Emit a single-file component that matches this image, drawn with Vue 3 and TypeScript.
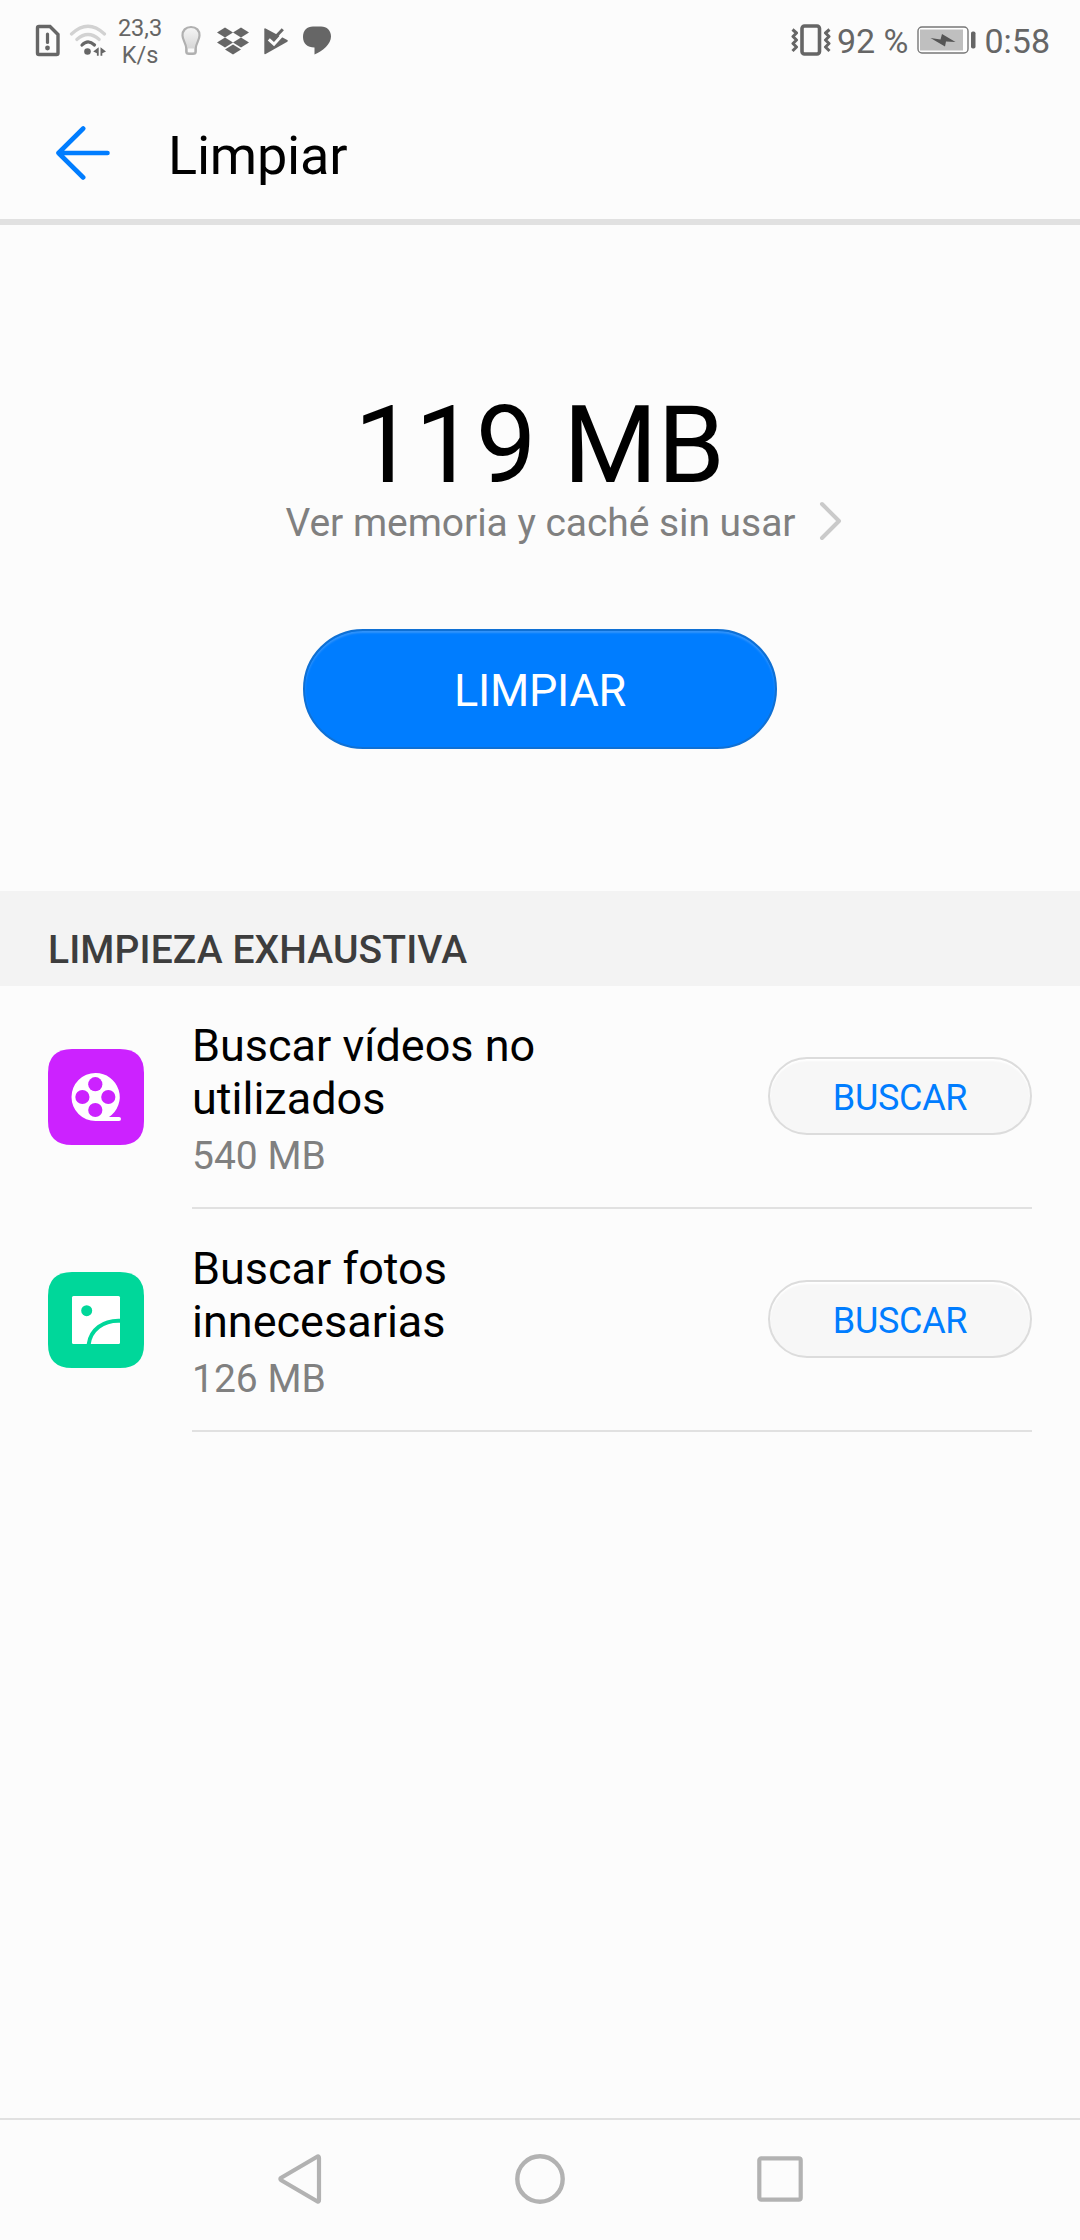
<script setup lang="ts">
interface CleanItem {
  id: 'videos' | 'photos'
  lines: string[]
  size: string
}

const items: CleanItem[] = [
  { id: 'videos', lines: ['Buscar vídeos no', 'utilizados'], size: '540 MB' },
  { id: 'photos', lines: ['Buscar fotos', 'innecesarias'], size: '126 MB' },
]
</script>

<template>
  <div class="screen">
    <div class="status">
      <div class="status-left">
        <svg class="ic-sim" width="26" height="34" viewBox="0 0 26 34">
          <path d="M4 2.500H15L23 10.500V29a1.500 1.500 0 0 1-1.500 1.500H4A1.500 1.500 0 0 1 2.500 29V4A1.500 1.500 0 0 1 4 2.500Z" fill="none" stroke="#666" stroke-width="3.400" />
          <path d="M12.500 10V18.500" stroke="#666" stroke-width="3.200" stroke-linecap="round" />
          <circle cx="12.500" cy="24" r="2.400" fill="#666" />
        </svg>
        <svg class="ic-wifi" width="40" height="34" viewBox="0 0 40 34">
          <g fill="none" stroke-width="3.200" stroke-linecap="round">
            <path d="M2.500 10Q19 -5.500 35.500 10" stroke="#d2d2d2" />
            <path d="M7.800 15.500Q19 5.500 30.200 15.500" stroke="#d2d2d2" />
            <path d="M13 21Q19 14.800 25.500 21" stroke="#666" />
          </g>
          <circle cx="18.500" cy="27.500" r="3.300" fill="#666" />
          <path d="M29.700 23.200v8.500h-1.800v-2.500l-3.700-1.700zM31.500 23.200v8.500h1.800v-2.500l3.700-1.700z" fill="#666" />
        </svg>
        <div class="speed"><span>23,3</span><span>K/s</span></div>
        <svg class="ic-bulb" width="22" height="32" viewBox="0 0 22 32">
          <defs>
            <linearGradient id="bulb" x1="0" y1="0" x2="0" y2="1">
              <stop offset="0" stop-color="#f6f6f6" />
              <stop offset="1" stop-color="#cfcfcf" />
            </linearGradient>
          </defs>
          <path d="M11 2C5.500 2 2.500 5.500 2.500 10.500C2.500 15 6 18.500 6.200 23V26.500Q6.200 29 9 29H13Q15.800 29 15.800 26.500V23C16 18.500 19.500 15 19.500 10.500C19.500 5.500 16.500 2 11 2Z" fill="url(#bulb)" stroke="#b0b0b0" stroke-width="2.200" />
          <path d="M8 23.500H14V27H8Z" fill="#fafafa" />
        </svg>
        <svg class="ic-box" width="32" height="28" viewBox="0 0 32 28">
          <g fill="#666">
            <path d="M8 .5L16 5.500L8 10.500L0 5.500Z" />
            <path d="M24 .5L32 5.500L24 10.500L16 5.500Z" />
            <path d="M8 10.500L16 15.500L8 20.500L0 15.500Z" />
            <path d="M24 10.500L32 15.500L24 20.500L16 15.500Z" />
            <path d="M16 17.500L24 22.500L16 27.500L8 22.500Z" />
          </g>
        </svg>
        <svg class="ic-play" width="25" height="27" viewBox="0 0 25 27">
          <path d="M.3 1.200Q.3 0 1.600 .5L23.300 12Q24.500 12.800 23.300 13.800L1.600 26Q.3 26.500 .3 25.300Z" fill="#666" />
          <path d="M4.800 11.300L10 16.200L20.800 4.200" fill="none" stroke="#fcfcfc" stroke-width="3" />
          <path d="M9.800 10.800L18.800 1.300" fill="none" stroke="#666" stroke-width="3" />
        </svg>
        <svg class="ic-chat" width="28" height="29" viewBox="0 0 28 29">
          <path d="M10 .5H18C24 .5 28 4.500 28 10.500C28 18 20 25 11.500 28.500V21.500C4.500 21.500 0 17.500 0 11C0 4.500 4 .5 10 .5Z" fill="#666" />
        </svg>
      </div>
      <div class="status-right">
        <svg class="ic-vib" width="40" height="32" viewBox="0 0 40 32">
          <rect x="11" y="2" width="17.500" height="28" rx="2.500" fill="none" stroke="#666" stroke-width="3.600" />
          <g fill="none" stroke="#666" stroke-width="3" stroke-linejoin="round">
            <path d="M1.500 5.500L5.500 9L2 12.500L5.500 16L2 19.500L5.500 23L1.500 27" />
            <path d="M38.500 5.500L34.500 9L38 12.500L34.500 16L38 19.500L34.500 23L38.500 27" />
          </g>
        </svg>
        <span class="pct">92 %</span>
        <svg class="ic-bat" width="60" height="28" viewBox="0 0 60 28">
          <rect x="1" y="1" width="50" height="26" rx="4" fill="#fff" stroke="#777" stroke-width="1.400" />
          <rect x="3" y="3.500" width="43" height="21" fill="#bfbfbf" />
          <path d="M13.500 12L23.500 13.500L25 8L38.500 16L29 15.500L28 20.500Z" fill="#555" />
          <rect x="54" y="5.500" width="4.500" height="17" rx="1.800" fill="#666" />
        </svg>
        <span class="clock">0:58</span>
      </div>
    </div>

    <header class="bar">
      <svg width="54" height="54" viewBox="0 0 54 54" fill="none" stroke="#007dff" stroke-width="4.600" stroke-linecap="round" stroke-linejoin="round">
        <path d="M27.200 2.500L2.500 27L27.200 51.500M2.500 27H51.500" />
      </svg>
      <h1>Limpiar</h1>
    </header>

    <section class="hero">
      <div class="total">119 MB</div>
      <div class="detail">
        <span>Ver memoria y caché sin usar</span>
        <svg width="24" height="40" viewBox="0 0 24 40" fill="none" stroke="#cacaca" stroke-width="4" stroke-linecap="round" stroke-linejoin="round">
          <path d="M3 3L20 20L3 37" />
        </svg>
      </div>
      <button class="primary">LIMPIAR</button>
    </section>

    <h2>LIMPIEZA EXHAUSTIVA</h2>

    <ul>
      <li v-for="item in items" :key="item.id">
        <svg v-if="item.id === 'videos'" class="app" width="96" height="96" viewBox="0 0 96 96">
          <path d="M24 0H72Q96 0 96 24V72Q96 96 72 96H24Q0 96 0 72V24Q0 0 24 0Z" fill="#cc22ff" />
          <path d="M47.500 24A24 24 0 0 1 61 68H71A2 2 0 0 1 71 72H47.500A24 24 0 0 1 47.500 24Z" fill="#fff" />
          <g fill="#cc22ff">
            <circle cx="47.300" cy="35.200" r="7.100" />
            <circle cx="34.400" cy="48" r="7.100" />
            <circle cx="60.300" cy="48" r="7.100" />
            <circle cx="47.300" cy="61" r="7.100" />
          </g>
        </svg>
        <svg v-else class="app" width="96" height="96" viewBox="0 0 96 96">
          <path d="M24 0H72Q96 0 96 24V72Q96 96 72 96H24Q0 96 0 72V24Q0 0 24 0Z" fill="#00d79a" />
          <rect x="24" y="24" width="48" height="48" rx="1.500" fill="#fff" />
          <circle cx="38.700" cy="38.700" r="5.500" fill="#00d79a" />
          <path d="M40.700 72.200C42.500 58 55 48 72.200 48.700" fill="none" stroke="#00d79a" stroke-width="4" />
        </svg>
        <div class="body">
          <div class="text">
            <div v-for="line in item.lines" :key="line" class="name">{{ line }}</div>
            <div class="size">{{ item.size }}</div>
          </div>
          <button class="search">BUSCAR</button>
        </div>
      </li>
    </ul>

    <nav>
      <svg width="44" height="50" viewBox="0 0 44 50" fill="none" stroke="#b2b2b2" stroke-width="4.200" stroke-linejoin="round">
        <path d="M39.500 2.500Q41 2 41 4V46Q41 48 39.500 47.500L3.200 26.200Q1.500 25 3.200 23.800Z" />
      </svg>
      <svg width="50" height="50" viewBox="0 0 50 50" fill="none" stroke="#b2b2b2" stroke-width="4.400">
        <circle cx="25" cy="25" r="22.700" />
      </svg>
      <svg width="46" height="46" viewBox="0 0 46 46" fill="none" stroke="#b2b2b2" stroke-width="4.200">
        <rect x="2.300" y="2.300" width="41.400" height="41.400" rx="2" />
      </svg>
    </nav>
  </div>
</template>

<style>
body {
  margin: 0;
  background: #fcfcfc;
}
</style>

<style scoped>
.screen {
  width: 1080px;
  height: 2240px;
  display: flex;
  flex-direction: column;
  background: #fcfcfc;
  color: #000;
  font-family: Roboto, "Liberation Sans", sans-serif;
  overflow: hidden;
}

svg {
  display: block;
  flex: none;
}

.status {
  height: 81px;
  display: flex;
  justify-content: space-between;
  color: #666;
}

.status-left,
.status-right {
  display: flex;
  align-items: flex-start;
}

.ic-sim { margin: 24px 0 0 35px; }
.ic-wifi { margin: 24px 0 0 8px; }
.ic-bulb { margin: 25px 0 0 15px; }
.ic-box { margin: 27px 0 0 15px; }
.ic-play { margin: 28px 0 0 15px; }
.ic-chat { margin: 26px 0 0 14px; }

.speed {
  width: 50px;
  margin: 15px 0 0 6px;
  display: flex;
  flex-direction: column;
  align-items: center;
  font-size: 23.500px;
  line-height: 27px;
}

.ic-vib { margin-top: 24px; }

.pct,
.clock {
  font-size: 34px;
  line-height: 40px;
  margin-top: 21px;
  white-space: nowrap;
}

.pct { margin-left: 6px; }
.ic-bat { margin: 26px 0 0 9px; }

.clock {
  margin-left: 7px;
  margin-right: 30px;
}

.bar {
  height: 138px;
  display: flex;
  border-bottom: 6px solid #e1e1e1;
}

.bar svg {
  margin: 45px 0 0 56px;
}

h1 {
  margin: 42px 0 0 58px;
  font-size: 54px;
  line-height: 65px;
  font-weight: 400;
  letter-spacing: -0.2px;
}

.hero {
  height: 500px;
  padding-top: 166px;
  display: flex;
  flex-direction: column;
  align-items: center;
}

.total {
  font-size: 108px;
  line-height: 108px;
  margin-left: -1px;
}

.detail {
  height: 46px;
  display: flex;
  align-items: center;
  gap: 24px;
  margin-left: 49px;
  font-size: 39px;
  line-height: 46px;
  letter-spacing: -0.05px;
  color: #808080;
}

.detail span {
  padding-top: 2px;
}

.detail svg {
  margin-bottom: 2px;
}

button {
  font-family: inherit;
  box-sizing: border-box;
  text-align: center;
}

.primary {
  width: 474px;
  height: 120px;
  margin-top: 84px;
  padding: 3px 0 0;
  border: 2px solid #0f70d4;
  border-radius: 60px;
  background: #007dff;
  box-shadow: inset 0 2px 2px #3394fa;
  color: #fff;
  font-size: 45px;
  letter-spacing: -0.3px;
}

h2 {
  margin: 0;
  padding: 36px 48px 13px;
  background: #f3f3f3;
  color: #3d3d3d;
  font-size: 39px;
  line-height: 46px;
  font-weight: 500;
  letter-spacing: 0.1px;
}

ul {
  flex: 1;
  margin: 0;
  padding: 0;
  list-style: none;
}

li {
  height: 223px;
  padding: 0 48px;
  display: flex;
}

.app {
  margin: 63px 48px 0 0;
}

.body {
  flex: 1;
  display: flex;
  justify-content: space-between;
  border-bottom: 2px solid #e1e1e1;
}

.text {
  padding-top: 33px;
}

.name {
  font-size: 45px;
  line-height: 53px;
}

.size {
  margin-top: 8px;
  font-size: 39px;
  line-height: 46px;
  color: #808080;
}

.search {
  width: 264px;
  height: 78px;
  margin-top: 71px;
  padding: 3px 0 0;
  border: 2px solid #dcdcdc;
  border-radius: 39px;
  background: #f7f7f7;
  box-shadow: inset 0 2px 2px #fff;
  color: #007dff;
  font-size: 36px;
  letter-spacing: -0.3px;
}

nav {
  height: 118px;
  padding: 0 0 2px 1px;
  display: flex;
  justify-content: center;
  align-items: center;
  gap: 192.500px;
  border-top: 2px solid #e1e1e1;
}
</style>
